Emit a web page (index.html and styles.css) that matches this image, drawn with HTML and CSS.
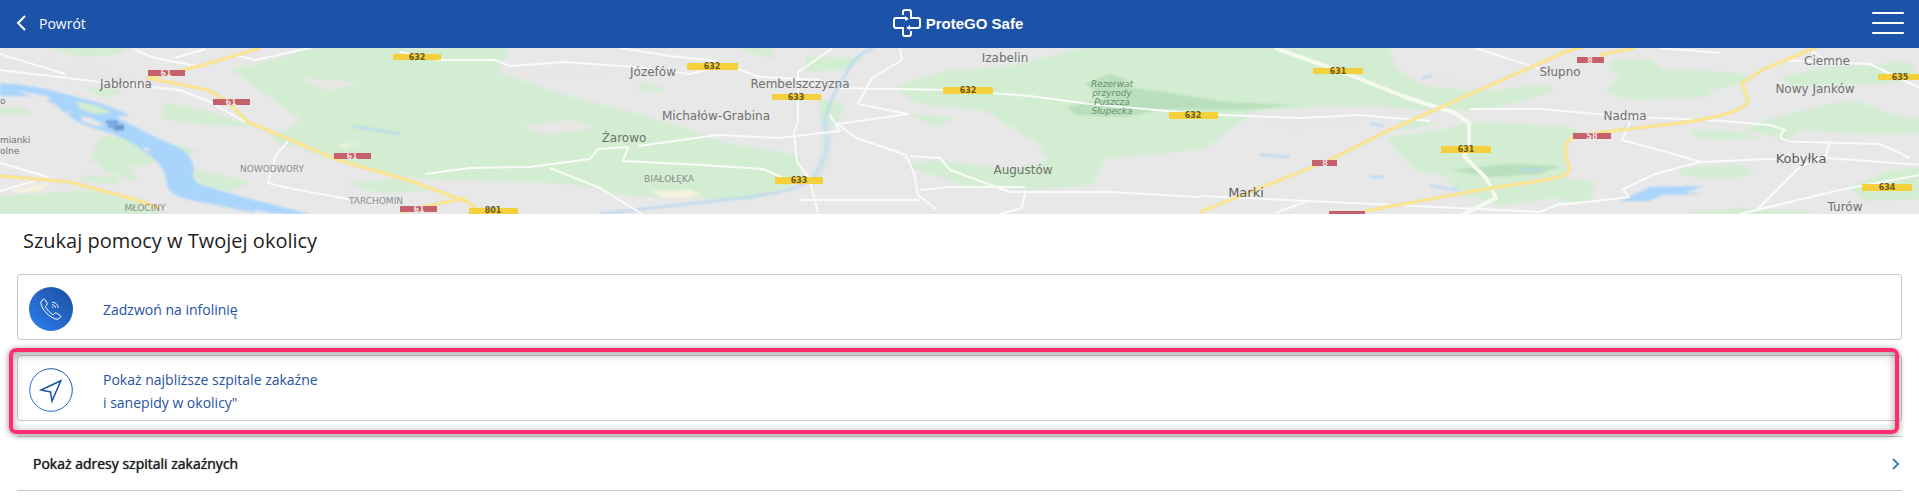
FILE: index.html
```html
<!DOCTYPE html>
<html lang="pl">
<head>
<meta charset="utf-8">
<meta name="viewport" content="width=device-width, initial-scale=1">
<title>ProteGO Safe</title>
<link rel="stylesheet" href="styles.css">
</head>
<body>
<header class="topbar">
  <button class="back" type="button">
    <svg class="back-icon" viewBox="0 0 10 16" aria-hidden="true"><path d="M9 1 2 8l7 7"/></svg>
    <span>Powrót</span>
  </button>
  <a class="brand" href="#">
    <svg class="brand-icon" viewBox="0 0 28 28" aria-hidden="true">
      <path d="M10 6V3q0-2 2-2h4q2 0 2 2v6h7q2 0 2 2v6q0 2-2 2h-9M18 22v3q0 2-2 2h-4q-2 0-2-2v-6H3q-2 0-2-2v-6q0-2 2-2h10"/>
      <path class="brand-tip" d="m12 7 4 3-4 2zM17 16l-4 3 4 2z"/>
    </svg>
    <span>ProteGO Safe</span>
  </a>
  <button class="menu" type="button" aria-label="Menu">
    <svg class="menu-icon" viewBox="0 0 32 24" aria-hidden="true"><path d="M1 2h30M1 12h30M1 22h30"/></svg>
  </button>
</header>

<svg class="map" viewBox="0 0 1919 166" preserveAspectRatio="xMidYMid slice" role="img" aria-label="Mapa okolicy">
  <g class="soft">
    <g class="wood">
      <path d="M50 0h80l-10 6-40 3zM232 22l48-12 30-10h200l-10 20 15 10 60 20 60 15 50 15 40 15 75 12v27l-50 18-120-4-60-12-150-5-60-12-54-16-21-17 15-15z"/>
      <path d="M540 100l110-6 60 2 20 8-10 12-60 2-70-6zM400 98l60-8 70 20 50 15 40 15-60-5-80-12-50-2zM100 88l60 4 40 12-60 14-50-4zM93 100l35 10 10 25-38-15zM0 148l90-6 60 14 10 10H0zM190 120l60 14-20 10-30-8zM166 54l44 10 50 16-60-4-40-6zM85 40l40 2-20 8zM0 60h25l5 6H0zM80 128l36 0 5 8-35-2z"/>
      <path d="M265 82l90 6 45 8v12l-60-8-60-2zM345 135l55-4 30 12-50 2zM642 34l22 6-5 4-22-2zM740 0h33v10l-25-6z"/>
      <path d="M1083 0h307l5 20 35 15 50 8 65-6 10 6-55 16-45 4-130-5-70 5-50 38-100 10-12 26-60 5-70-5-60-20 30-5 80 10 35-9-10-18-53-32-70-8-20-16 50-16 65-5z"/>
      <path d="M1385 90l60-9 30-8 95 6-5 55-60 6-90-18zM1445 130l120-2 5 20-70 10-40-12zM1400 70l40 5-40 8zM1610 12l40 0 15 10 70 2 20 8-50 12 10 4-80 4-30-8 15-14-10-8zM1780 30l40-10 90-6 9 16-30 6-95 2zM1765 72l60-15 30-5 30 12 34 8v14l-60 0-60-4-10 10-45-10zM1690 82l50 2 20 6-40 2-28-4zM1680 120l60-4 15 10-30 5-45-4zM1850 140l40-18 29-3v32l-55 2z"/>
      <path d="M1560 74l20 10-15 12zM1560 130l35 4-5 20-28 2zM1690 164l50-4 70 4v2h-120zM806 8l60 2-20 12-40 2zM910 66l45 4-20 9zM820 50l25 6-10 22-15-4z"/>
    </g>
    <path class="reserve" d="M1085 36l25-10 15 5v8l40 5 60 10 70 3-50 5-80-1-40 8-50-2-8-8 38-8zM1450 122l60-6 50 2-20 8-50 3z"/>
    <g class="built">
      <path d="M500 15l60 4 50 8-10 6-60-4-40-2zM520 78l50-6 28 7-50 8zM300 30l60 4-30 10zM0 8l80 8 60 10-70 10-60-6z"/>
      <path d="M1290 62l90-4 70 8-80 6-70 12-40-4zM1395 20l50 8 50 8-30 6-40-4z"/>
    </g>
    <path class="sand" d="M10 142l40-7-10 8-25 2zM335 97l25-2-15 5zM650 143l40-1 12 4-15 4-24-1z"/>
    <path class="water" d="M0 35q30 2 50 7t30 8q20 4 42 14l8 3-14 2 12 6q25 14 50 24 18 10 15 27 0 10 15 13l42 12 60 15h-30l-62-9q-45-6-50-17l-3-12q-2-12-20-24-20-16-45-22-25-6-45-26-20-8-30-8L0 48z"/>
    <path class="wood" d="M76 53l20 4 16 8-18 1-14-5z"/>
    <path class="built" d="M15 42l32 6 5 4-12 0zM82 68l10 2 13 8-12 0-12-6zM142 98l10 4-6 1zM66 63l6 1-4 2z"/>
    <path class="shoal" d="M106 74h12M108 78h16M114 81h10"/>
    <path class="pond" d="M1620 153l30-14 55-1-20 6 18 2-40 1-14 6z"/>
    <g class="stream">
      <path d="M205 154l50 10M352 78l48 8M1260 107l30 2M1370 76l14 2M1430 138l28 4M1422 30l10-2M1625 79h10M1370 129h14M1520 122h22"/>
      <path d="M873 0q-22 10-26 25-12 15-22 45l2 28q-3 20-14 32-15 14-73 20L600 166"/>
    </g>
    <path class="stream-wide" d="M825 65l2 30q-2 22-14 35"/>
  </g>
  <g class="streets">
    <path d="M0 6l65 20M135 2l20 8 47 9M175 10l30-9M235 7l20 5 55-12M0 22l100 12 20 2 60 6 30 12 35 20M0 115l48 14-48 14M290 91l-14 16-8 28 20 5 60 11"/>
    <path d="M400 4l40 8h55l15 6 55-4 70 5 55 7 30-8M620 0l50 8 40 4 50 17 60 3M425 126l45-6 60-1 60-8 8-10 30-2-5 14 80 4 60 4 30 13M550 120l50 20 42 26M638 98l80-11 60 3 62-7-10-16"/>
    <path d="M833 0l-35 24v50l-4 10 3 30 12 16 9 34M900 0l2 12-30 18-14 26 50 10-70 10 18 14 50 17 8 18 4 22 18 14M910 108l30 2 10 12 60 22 100 0 90 5M1025 145l-3 15-22 6M920 142l30-3h75M800 152h120M840 40l110 2 80 6 60 8 110 10 100 4 60-3 70 6"/>
    <path d="M1475 0l75 24M1470 61l70 0 90 8 80 3 60 5 15 5q-15 12 20 12l75 2 30 14M1630 74l-8 18 80 22 110-5 110 8M1700 114l-45 12-32 15 6 8-68 8M1830 94l-4 14-25 10-45 45M1660 0l60 5M1810 2l12 8M1780 12l90 4 50 24M1200 148l130 6 210 10M1310 152l-35 13M1540 164l20-8 40-3M1740 166l100-24 79-15"/>
    <path class="street-wide" d="M1275 0l70 25 60 24 50 16 14 10v25l-5 8 22 22 10 20-36 18"/>
  </g>
  <g class="roads-edge">
    <path d="M260 0l-60 18-52 12 60 12 20 12 20 20 90 38 70 20 60 22 15 12M0 128l70 6 60 16 30 10M400 164l65-14"/>
    <path d="M1200 164l125-50 60-30 90-40 90-40 30-8M1600 7l35-7M1365 163l120-22 60-9q28-4 24-14l-4-15q-2-16 30-18l85-10q70-10 68-24l-6-16 22-14 60-25"/>
  </g>
  <g class="roads">
    <path d="M260 0l-60 18-52 12 60 12 20 12 20 20 90 38 70 20 60 22 15 12M0 128l70 6 60 16 30 10M400 164l65-14"/>
    <path d="M1200 164l125-50 60-30 90-40 90-40 30-8M1600 7l35-7M1365 163l120-22 60-9q28-4 24-14l-4-15q-2-16 30-18l85-10q70-10 68-24l-6-16 22-14 60-25"/>
  </g>
  <g class="plate-red">
    <path d="M148 22h37v6h-37zM213 51h37v6h-37zM334 105h37v6h-37zM400 158h37v6h-37zM1312 112h25v6h-25zM1577 9h27v6h-27zM1573 85h38v6h-38zM1329 163h36v6h-36z"/>
  </g>
  <g class="plate-yellow">
    <path d="M393 6h48v6h-48zM687 15h51v7h-51zM772 46h49v6h-49zM775 129h48v7h-48zM469 160h49v7h-49zM943 39h50v7h-50zM1169 64h49v7h-49zM1313 20h50v6h-50zM1441 98h50v7h-50zM1878 26h50v6h-50zM1862 136h50v7h-50z"/>
  </g>
  <g class="plate-text light">
    <text x="166" y="28">61</text><text x="231" y="57">61</text><text x="352" y="111">61</text><text x="419" y="164">61</text><text x="1325" y="118">8</text><text x="1590" y="15">8</text><text x="1592" y="91">S8</text>
  </g>
  <g class="plate-text">
    <text x="417" y="12">632</text><text x="712" y="21">632</text><text x="796" y="52">633</text><text x="799" y="135">633</text><text x="493" y="165">801</text><text x="968" y="45">632</text><text x="1193" y="70">632</text><text x="1338" y="26">631</text><text x="1466" y="104">631</text><text x="1900" y="32">635</text><text x="1887" y="142">634</text>
  </g>
  <g class="towns">
    <text x="126" y="40">Jabłonna</text><text x="653" y="28">Józefów</text><text x="800" y="40">Rembelszczyzna</text><text x="716" y="72">Michałów-Grabina</text><text x="624" y="94">Żarowo</text><text x="1005" y="14">Izabelin</text><text x="1023" y="126">Augustów</text><text x="1560" y="28">Słupno</text><text x="1625" y="72">Nadma</text><text x="1827" y="17">Ciemne</text><text x="1815" y="45">Nowy Janków</text><text x="1845" y="163">Turów</text>
  </g>
  <g class="towns major">
    <text x="1246" y="149">Marki</text><text x="1801" y="115">Kobyłka</text>
  </g>
  <g class="edge-town"><text x="0" y="95">mianki</text><text x="0" y="106">olne</text><text x="0" y="56">o</text></g>
  <g class="districts">
    <text x="272" y="124">NOWODWORY</text><text x="145" y="163">MŁOCINY</text><text x="376" y="156">TARCHOMIN</text><text x="669" y="134">BIAŁOŁĘKA</text>
  </g>
  <g class="park">
    <text x="1112" y="39">Rezerwat</text><text x="1112" y="48">przyrody</text><text x="1112" y="57">Puszcza</text><text x="1112" y="66">Słupecka</text>
  </g>
</svg>

<main class="content">
  <h1 class="title">Szukaj pomocy w Twojej okolicy</h1>
  <button class="card" type="button">
    <svg class="card-icon" viewBox="0 0 44 44" aria-hidden="true">
      <defs><linearGradient id="blue" x1="0" y1="1" x2="1" y2="0"><stop offset="0.1" stop-color="#2b79ea"/><stop offset="0.9" stop-color="#1f53a5"/></linearGradient></defs>
      <circle cx="22" cy="22" r="22" fill="url(#blue)"/>
      <g class="phone">
        <path d="M13 13.500l1.500-1.200q1-.5 1.700.5l2 3.500q.5 1-.5 1.700l-1 .8q-.5.500 0 1.500 2.500 4 6.500 7 1 .6 1.600 0l1-1.100q.7-.7 1.700-.1l3.700 2.300q1 .8.300 1.700l-1.300 1.400q-1.500 1.300-4.500.3-6.500-2.500-10.700-8.500-2.800-4.500-3.200-7-.2-1.800 1.200-2.800z"/>
        <path d="M23.500 20.200h.3M23.500 17.700q2.500.2 3 2.700M23.500 15.200q5 .4 5.700 5.200"/>
      </g>
    </svg>
    <span class="card-text">Zadzwoń na infolinię</span>
  </button>
  <button class="card marked" type="button">
    <svg class="card-icon" viewBox="0 0 44 44" aria-hidden="true">
      <circle class="ring" cx="22" cy="22" r="21.300" stroke="url(#blue)"/>
      <path class="arrow" d="M31.800 12.700 12 22l9.500 2L23 33z"/>
    </svg>
    <span class="card-text">Pokaż najbliższe szpitale zakaźne<br>i sanepidy w okolicy"</span>
  </button>
  <button class="row" type="button">
    <span>Pokaż adresy szpitali zakaźnych</span>
    <svg class="row-icon" viewBox="0 0 8 12" aria-hidden="true"><path d="m1 1 5 5-5 5"/></svg>
  </button>
</main>
</body>
</html>
```

FILE: styles.css
```css
* { box-sizing: border-box; }
body {
  margin: 0;
  background: #fff;
  color: #1e1e1e;
  font-family: "Open Sans", sans-serif;
  font-size: 14px;
}
button {
  margin: 0;
  padding: 0;
  border: 0;
  background: none;
  color: inherit;
  font: inherit;
  text-align: left;
  cursor: pointer;
}
svg { display: block; flex: none; }

/* Top bar */
.topbar {
  display: grid;
  grid-template-columns: 1fr auto 1fr;
  align-items: center;
  height: 48px;
  padding: 0 15px 2px 16px;
  background: #1c52a8;
  color: #fff;
}
.back { display: flex; align-items: center; gap: 13px; justify-self: start; }
.back-icon { width: 10px; height: 16px; fill: none; stroke: #fff; stroke-width: 2; }
.brand {
  display: flex;
  align-items: center;
  gap: 5px;
  padding-right: 4px;
  color: #fff;
  font: bold 15px "Liberation Sans", sans-serif;
  text-decoration: none;
}
.brand-icon { width: 28px; height: 28px; fill: none; stroke: #fff; stroke-width: 2; }
.brand-tip { fill: #fff; stroke: none; }
.menu { justify-self: end; }
.menu-icon { width: 32px; height: 24px; stroke: #fff; stroke-width: 2; stroke-linecap: round; }

/* Map */
.map { width: 100%; height: 166px; background: #e8e8e8; }
.soft { filter: blur(1px); }
.wood { fill: #d2edd2; }
.reserve { fill: #b9dfbc; }
.built { fill: #e9e6e6; }
.sand { fill: #f6f2dc; }
.water, .pond { fill: #a9d5fd; }
.shoal { stroke: #6a9ad0; stroke-width: 3; }
.stream { fill: none; stroke: #b5d6f3; stroke-width: 2; }
.stream-wide { fill: none; stroke: #cbe3e6; stroke-width: 10; opacity: 0.5; }
.streets { fill: none; stroke: #fafafa; stroke-width: 2; stroke-linejoin: round; }
.street-wide { stroke: #f5faf0; stroke-width: 4; }
.roads-edge { fill: none; stroke: #f0e2b8; stroke-width: 4; stroke-linejoin: round; }
.roads { fill: none; stroke: #fbe68a; stroke-width: 2; stroke-linejoin: round; }
.plate-red { fill: #c4616a; }
.plate-yellow { fill: #f3d03c; }
.plate-text { fill: #6b5a1c; font: bold 8px "DejaVu Sans", sans-serif; text-anchor: middle; }
.plate-text.light { fill: #f4dede; }
.towns { fill: #70706f; font: 12px "DejaVu Sans", sans-serif; text-anchor: middle; }
.towns.major { fill: #5c5c5c; font-size: 13px; }
.edge-town { fill: #70706f; font: 9px "DejaVu Sans", sans-serif; }
.districts { fill: #8d8d8f; font: 9px "DejaVu Sans", sans-serif; text-anchor: middle; }
.park { fill: #66906c; font: italic 9px "DejaVu Sans", sans-serif; text-anchor: middle; }

/* Help list */
.content { display: flex; flex-direction: column; padding: 13px 17px 0; }
.title { margin: 0 0 19px; padding-left: 6px; font-size: 20px; font-weight: 400; line-height: 28px; }
.card {
  position: relative;
  display: flex;
  align-items: center;
  gap: 30px;
  min-height: 66px;
  margin-bottom: 15px;
  padding: 6px 11px 2px;
  border: 1px solid #c8c8c8;
  border-radius: 3px;
  color: #26529f;
}
.card-icon { width: 44px; height: 44px; }
.card-text { padding-top: 1px; line-height: 23px; }
.phone { fill: none; stroke: #fff; stroke-width: 1; stroke-linejoin: round; stroke-linecap: round; }
.ring { fill: none; stroke-width: 1; }
.arrow { fill: none; stroke: #1f53a5; stroke-width: 1.5; }

/* Highlight frame over the second card */
.marked::after {
  content: "";
  position: absolute;
  inset: -8px 2px -14px -9px;
  border: 4px solid #ff2d6b;
  border-radius: 7px;
  box-shadow: 0 1px 6px rgba(0, 0, 0, 0.45), inset 0 2px 8px rgba(0, 0, 0, 0.4);
  pointer-events: none;
}
.row {
  display: flex;
  align-items: center;
  justify-content: space-between;
  min-height: 55px;
  padding: 0 2px 0 16px;
  border-top: 1px solid #c8c8c8;
  border-bottom: 1px solid #c8c8c8;
  text-shadow: 0 0 1px #1e1e1e;
}
.row-icon { width: 8px; height: 12px; fill: none; stroke: #3f7fc0; stroke-width: 2; }
```
